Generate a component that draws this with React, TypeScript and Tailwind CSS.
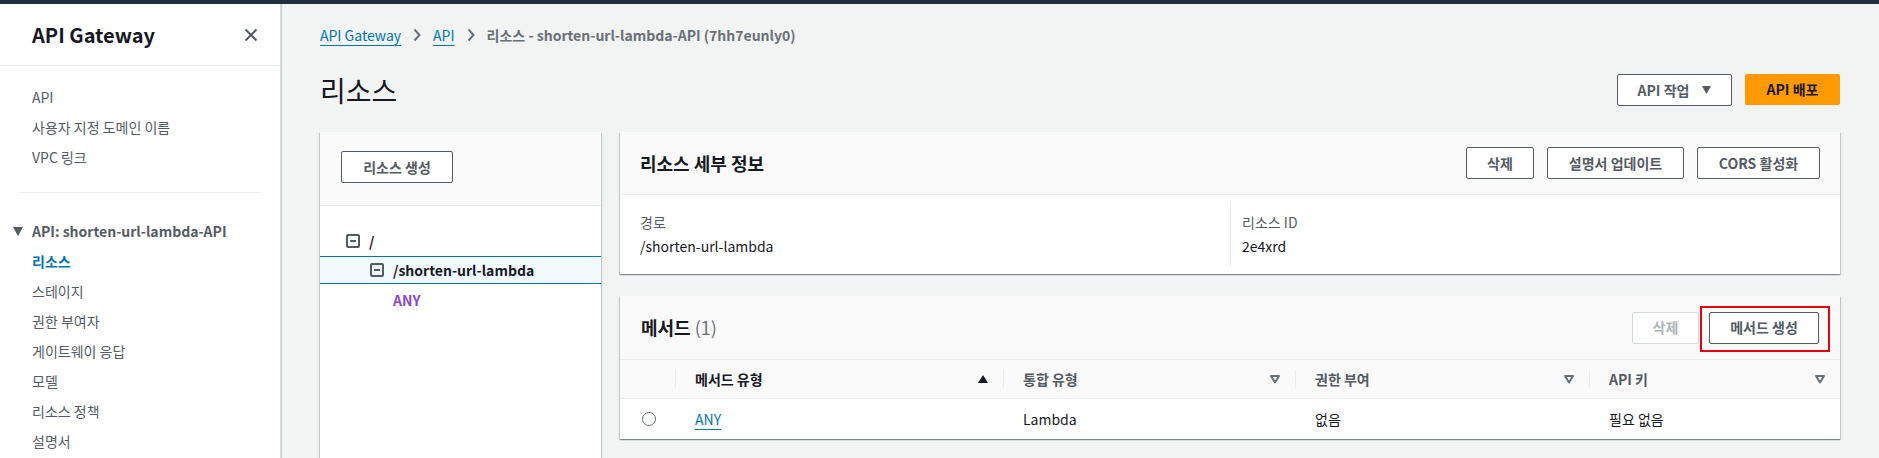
import { ReactNode } from "react";

const topLinks = ["API", "사용자 지정 도메인 이름", "VPC 링크"];
const apiLinks = ["리소스", "스테이지", "권한 부여자", "게이트웨이 응답", "모델", "리소스 정책", "설명서"];

const panelShadow =
  "bg-white shadow-[0_1px_1px_0_rgba(0,28,36,0.3),1px_1px_1px_0_rgba(0,28,36,0.15),-1px_1px_1px_0_rgba(0,28,36,0.15)]";

const Chevron = () => (
  <svg width="10" height="14" viewBox="0 0 10 14" className="shrink-0">
    <path d="M2.5 1.5 L7.5 7 L2.5 12.5" fill="none" stroke="#687078" strokeWidth="2" />
  </svg>
);

const SortDown = () => (
  <svg width="12" height="12" viewBox="0 0 12 12">
    <polygon points="2,3 10,3 6,9.5" fill="none" stroke="#687078" strokeWidth="2" strokeLinejoin="round" />
  </svg>
);

const SortUp = () => (
  <svg width="12" height="12" viewBox="0 0 12 12">
    <polygon points="1,10 11,10 6,2" fill="#16191f" />
  </svg>
);

const MinusBox = () => (
  <span className="w-[14px] h-[14px] rounded-[2px] border-2 border-[#545b64] flex items-center justify-center shrink-0">
    <span className="w-[6px] h-[2px] bg-[#545b64]" />
  </span>
);

const Btn = ({ children, className = "" }: { children: ReactNode; className?: string }) => (
  <button
    className={
      "h-[32px] rounded-[2px] border border-[#545b64] bg-white text-[14px] font-bold text-[#545b64] flex items-center justify-center " +
      className
    }
  >
    {children}
  </button>
);

const Sidebar = () => (
  <aside className="w-[281px] shrink-0 bg-white border-r border-[#d5dbdb] shadow-[1px_0_1px_0_rgba(0,28,36,0.15)]">
    <div className="h-[62px] flex items-center justify-between pl-[32px] pr-[22px] border-b border-[#eaeded]">
      <span className="text-[20px] font-bold text-[#16191f]">API Gateway</span>
      <svg width="14" height="14" viewBox="0 0 14 14">
        <path d="M1.5 1.5 L12.5 12.5 M12.5 1.5 L1.5 12.5" stroke="#545b64" strokeWidth="2" />
      </svg>
    </div>
    <ul className="pt-[16px] pb-[20px]">
      {topLinks.map((l) => (
        <li key={l} className="h-[30px] leading-[30px] pl-[32px] text-[14px] text-[#545b64]">
          {l}
        </li>
      ))}
    </ul>
    <div className="mx-[20px] border-t border-[#eaeded]" />
    <div className="pt-[23px]">
      <div className="h-[30px] flex items-center pl-[13px] gap-[9px] text-[14px] font-bold text-[#545b64]">
        <svg width="10" height="9" viewBox="0 0 10 9">
          <polygon points="0,0 10,0 5,9" fill="#545b64" />
        </svg>
        API: shorten-url-lambda-API
      </div>
      <ul>
        {apiLinks.map((l, i) => (
          <li
            key={l}
            className={
              i === 0
                ? "h-[30px] leading-[30px] pl-[32px] text-[14px] font-bold text-[#0073bb]"
                : "h-[30px] leading-[30px] pl-[32px] text-[14px] text-[#545b64]"
            }
          >
            {l}
          </li>
        ))}
      </ul>
    </div>
  </aside>
);

const ResourceTree = () => (
  <div className={"w-[281px] shrink-0 " + panelShadow}>
    <div className="bg-[#fafafa] border-b border-[#eaeded] px-[21px] pt-[19px] pb-[22px]">
      <Btn className="w-[112px]">리소스 생성</Btn>
    </div>
    <div className="pt-[20px] text-[14px] font-bold text-[#16191f]">
      <div className="h-[30px] flex items-center pl-[26px] gap-[9px]">
        <MinusBox />
        <span>/</span>
      </div>
      <div className="h-[28px] flex items-center pl-[50px] gap-[9px] bg-[#f1faff] border-y border-[#0073bb]">
        <MinusBox />
        <span>/shorten-url-lambda</span>
      </div>
      <div className="h-[33px] flex items-center pl-[73px] text-[#8b46d1]">ANY</div>
    </div>
  </div>
);

const ResourceDetails = () => (
  <div className={panelShadow}>
    <div className="h-[63px] bg-[#fafafa] border-b border-[#eaeded] flex items-center justify-between px-[20px]">
      <h2 className="text-[18px] font-bold text-[#16191f]">리소스 세부 정보</h2>
      <div className="flex gap-[13px]">
        <Btn className="w-[68px]">삭제</Btn>
        <Btn className="w-[137px]">설명서 업데이트</Btn>
        <Btn className="w-[123px]">CORS 활성화</Btn>
      </div>
    </div>
    <div className="grid grid-cols-2 pt-[6px] pb-[7px] text-[14px] leading-[24px]">
      <div className="pl-[20px] pt-[9px] h-[66px]">
        <div className="text-[#545b64]">경로</div>
        <div className="text-[#16191f]">/shorten-url-lambda</div>
      </div>
      <div className="pl-[11px] pt-[9px] h-[66px] border-l border-[#eaeded]">
        <div className="text-[#545b64]">리소스 ID</div>
        <div className="text-[#16191f]">2e4xrd</div>
      </div>
    </div>
  </div>
);

const cols = [
  { label: "메서드 유형", sorted: true },
  { label: "통합 유형", sorted: false },
  { label: "권한 부여", sorted: false },
  { label: "API 키", sorted: false },
];

const Methods = () => (
  <div className={panelShadow}>
    <div className="h-[64px] bg-[#fafafa] border-b border-[#eaeded] flex items-center justify-between pl-[21px] pr-[21px]">
      <h2 className="text-[18px] font-bold text-[#16191f]">
        메서드 <span className="font-normal text-[#687078]">(1)</span>
      </h2>
      <div className="flex gap-[10px]">
        <button className="h-[32px] w-[67px] rounded-[2px] border border-[#d5dbdb] bg-white text-[14px] font-bold text-[#aab7b8]">
          삭제
        </button>
        <div className="relative">
          <Btn className="w-[110px]">메서드 생성</Btn>
          <span className="absolute -left-[9px] -right-[11px] -top-[6px] -bottom-[8px] border-2 border-[#e60012] pointer-events-none" />
        </div>
      </div>
    </div>
    <div className="grid grid-cols-[55px_328px_292px_294px_1fr] h-[39px] bg-[#fafafa] border-b border-[#eaeded] text-[14px] font-bold">
      <div />
      {cols.map((c) => (
        <div key={c.label} className="relative flex items-center justify-between pl-[20px] pr-[14px]">
          <span className="absolute left-0 top-[10px] h-[19px] border-l border-[#eaeded]" />
          <span className={c.sorted ? "text-[#16191f]" : "text-[#545b64]"}>{c.label}</span>
          {c.sorted ? <SortUp /> : <SortDown />}
        </div>
      ))}
    </div>
    <div className="grid grid-cols-[55px_328px_292px_294px_1fr] h-[40px] items-center text-[14px] text-[#16191f]">
      <div className="flex justify-center pl-[2px]">
        <span className="w-[14px] h-[14px] rounded-full border-[1.5px] border-[#687078]" />
      </div>
      <div className="pl-[20px]">
        <span className="text-[#0073bb] underline underline-offset-4">ANY</span>
      </div>
      <div className="pl-[20px]">Lambda</div>
      <div className="pl-[20px]">없음</div>
      <div className="pl-[20px]">필요 없음</div>
    </div>
  </div>
);

const App = () => {
  return (
    <div className="w-[1879px] h-[458px] overflow-hidden flex flex-col bg-[#f2f3f3] font-['Noto_Sans_CJK_KR','Noto_Sans',sans-serif]">
      <div className="h-[4px] bg-[#232f3e] shrink-0" />
      <div className="flex flex-1 min-h-0">
        <Sidebar />

        <main className="flex-1 flex flex-col px-[39px] pt-[21px]">
          {/* breadcrumbs */}
          <nav className="h-[20px] flex items-center gap-[11px] text-[14px]">
            <span className="text-[#0073bb] underline underline-offset-4">API Gateway</span>
            <Chevron />
            <span className="text-[#0073bb] underline underline-offset-4">API</span>
            <Chevron />
            <span className="font-bold text-[#687078]">리소스 - shorten-url-lambda-API (7hh7eunly0)</span>
          </nav>

          <div className="mt-[29px] flex items-start justify-between">
            <h1 className="mt-[1px] text-[28px] leading-[30px] text-[#16191f]">리소스</h1>
            <div className="flex gap-[13px]">
              <Btn className="h-[31px] w-[115px] gap-[13px]">
                API 작업
                <svg width="9" height="8" viewBox="0 0 9 8">
                  <polygon points="0,0 9,0 4.5,8" fill="#545b64" />
                </svg>
              </Btn>
              <button className="h-[31px] w-[95px] rounded-[2px] bg-[#ff9900] text-[14px] font-bold text-[#16191f]">
                API 배포
              </button>
            </div>
          </div>

          <div className="mt-[26px] flex gap-[19px] flex-1">
            <ResourceTree />
            <div className="flex-1 flex flex-col gap-[22px]">
              <ResourceDetails />
              <Methods />
            </div>
          </div>
        </main>
      </div>
    </div>
  );
};

export default App;
